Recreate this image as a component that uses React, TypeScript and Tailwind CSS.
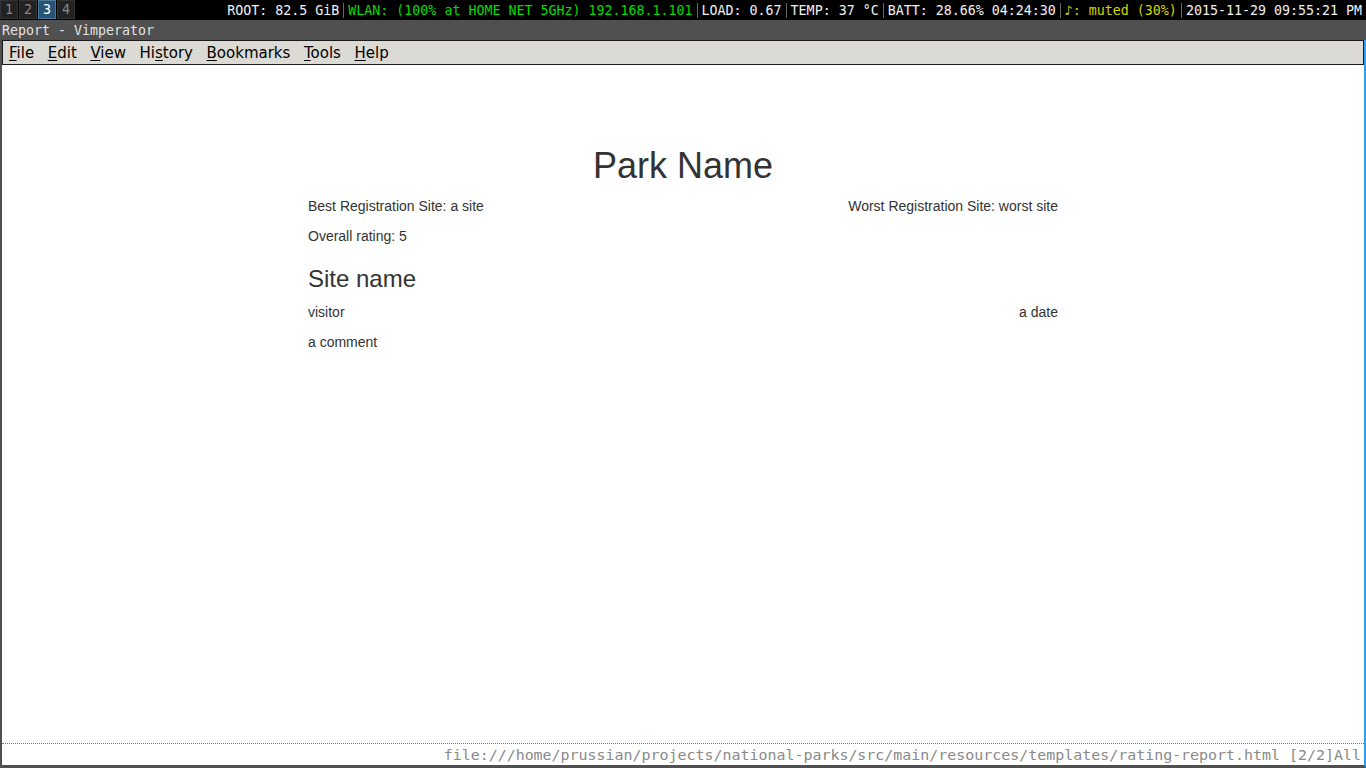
import React from 'react';

const mono = { fontFamily: '"DejaVu Sans Mono", monospace' };

const Sep = () => (
  <span className="flex w-[9px] justify-center self-stretch items-center">
    <span className="h-[15px] w-px bg-[#666]" />
  </span>
);

const blocks: { text: string; color: string }[] = [
  { text: 'ROOT: 82.5 GiB', color: 'text-[#f0f0f0]' },
  { text: 'WLAN: (100% at HOME NET 5GHz) 192.168.1.101', color: 'text-[#00dd00]' },
  { text: 'LOAD: 0.67', color: 'text-[#f0f0f0]' },
  { text: 'TEMP: 37 °C', color: 'text-[#f0f0f0]' },
  { text: 'BATT: 28.66% 04:24:30', color: 'text-[#f0f0f0]' },
  { text: '♪: muted (30%)', color: 'text-[#d4d400]' },
  { text: '2015-11-29 09:55:21 PM', color: 'text-[#f0f0f0]' },
];

const menu: [string, string, string][] = [
  ['', 'F', 'ile'],
  ['', 'E', 'dit'],
  ['', 'V', 'iew'],
  ['Hi', 's', 'tory'],
  ['', 'B', 'ookmarks'],
  ['', 'T', 'ools'],
  ['', 'H', 'elp'],
];

const App: React.FC = () => {
  return (
    <div className="w-[1366px] h-[768px] flex flex-col overflow-hidden bg-black">
      {/* i3bar */}
      <div className="h-[20px] flex items-center bg-black text-[13.3px] leading-none" style={mono}>
        <div className="flex gap-px h-[19px] self-start">
          {['1', '2', '3', '4'].map((n) => (
            <span
              key={n}
              className={
                n === '3'
                  ? 'w-[18px] pt-px flex items-center justify-center border border-[#4c7899] bg-[#285577] text-white'
                  : 'w-[18px] pt-px flex items-center justify-center border border-[#333] bg-[#222] text-[#888]'
              }
            >
              {n}
            </span>
          ))}
        </div>
        <div className="flex-1 flex justify-end items-center pr-[4px] pt-px h-full">
          {blocks.map((b, i) => (
            <React.Fragment key={i}>
              {i > 0 && <Sep />}
              <span className={`whitespace-pre ${b.color}`}>{b.text}</span>
            </React.Fragment>
          ))}
        </div>
      </div>

      {/* window title */}
      <div className="h-[20px] bg-[#505050] flex items-center px-[2px] pt-[2px] text-[13.3px] text-[#e2e2e2] leading-none" style={mono}>
        Report - Vimperator
      </div>

      {/* window */}
      <div className="flex-1 flex flex-col border-l-2 border-b-[3px] border-r-2 border-l-[#505050] border-b-[#505050] border-r-[#2e9ef4] bg-white">
        <div
          className="h-[25px] flex items-center bg-[#dcdad5] border border-[#1c1c1c] pl-[6px] pt-[2px] text-[15px] text-black"
          style={{ fontFamily: '"DejaVu Sans", sans-serif' }}
        >
          {menu.map(([a, u, b]) => (
            <span key={u + b} className="mr-[13.6px]">
              {a}
              <span className="underline underline-offset-2">{u}</span>
              {b}
            </span>
          ))}
        </div>

        <div className="flex-1 pt-[81px] text-[#333] text-[14px] leading-[20px]" style={{ fontFamily: '"Liberation Sans", Arial, sans-serif' }}>
          <div className="w-[750px] mx-auto">
            <h1 className="text-[36px] leading-[1.1] text-center mb-[10px]">Park Name</h1>
            <div className="flex justify-between">
              <p className="mb-[10px]">Best Registration Site: a site</p>
              <p className="mb-[10px]">Worst Registration Site: worst site</p>
            </div>
            <p className="mb-[10px]">Overall rating: 5</p>
            <h3 className="text-[24px] leading-[1.1] mt-[20px] mb-[10px]">Site name</h3>
            <div className="flex justify-between">
              <p className="mb-[10px]">visitor</p>
              <p className="mb-[10px]">a date</p>
            </div>
            <p className="mb-[10px]">a comment</p>
          </div>
        </div>

        <div className="h-[22px] border-t border-dotted border-[#777] flex items-center justify-end pr-[3px] pt-px text-[14.95px] text-[#8a8a8a] leading-none" style={mono}>
          <span className="whitespace-pre">file:///home/prussian/projects/national-parks/src/main/resources/templates/rating-report.html [2/2]</span>
          <span>All</span>
        </div>
      </div>
    </div>
  );
};

export default App;
